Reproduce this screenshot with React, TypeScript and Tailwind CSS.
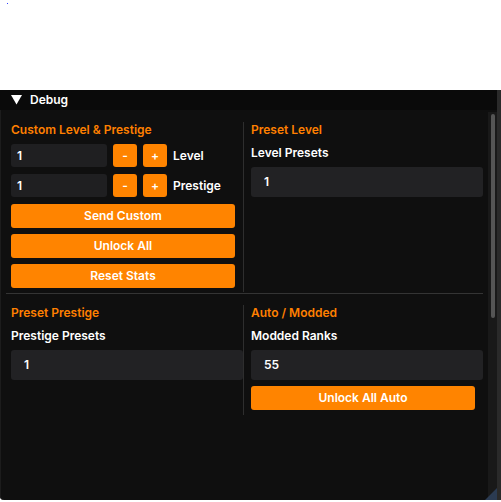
import React from "react";

const orange = "bg-[#ff8400]";

function SmallBtn({ label }: { label: string }) {
  return (
    <div className={`${orange} w-[24px] h-[23px] rounded-[3px] flex items-center justify-center text-white text-[12px] font-semibold`}>
      {label}
    </div>
  );
}

function WideBtn({ label, className = "" }: { label: string; className?: string }) {
  return (
    <div className={`${orange} h-[24px] rounded-[3px] flex items-center justify-center text-white text-[12px] font-semibold ${className}`}>
      {label}
    </div>
  );
}

function Stepper({ name }: { name: string }) {
  return (
    <div className="flex items-center h-[23px]">
      <div className="w-[96px] h-full rounded-[3px] bg-[#1f1f21] flex items-center pl-[6px] text-white text-[12px] font-semibold">1</div>
      <div className="ml-[6px] flex gap-[6px]">
        <SmallBtn label="-" />
        <SmallBtn label="+" />
      </div>
      <span className="ml-[6px] text-white text-[12px] font-semibold">{name}</span>
    </div>
  );
}

function Heading({ children }: { children: React.ReactNode }) {
  return <div className="h-[16px] leading-[16px] text-[#ff8000] text-[12px] font-semibold">{children}</div>;
}

function Label({ children }: { children: React.ReactNode }) {
  return <div className="mt-[7px] h-[16px] leading-[16px] text-white text-[12px] font-semibold">{children}</div>;
}

function Field({ value, className = "" }: { value: string; className?: string }) {
  return (
    <div className={`mt-[6px] h-[30px] rounded-[3px] bg-[#222224] flex items-center pl-[13px] text-white text-[12px] font-semibold ${className}`}>
      {value}
    </div>
  );
}

export default function App() {
  return (
    <div className="w-[501px] h-[502px] bg-white overflow-hidden relative" style={{ fontFamily: "Inter, 'Noto Sans', sans-serif" }}>
      <div className="h-[90px] relative">
        <div className="absolute left-[7px] top-[3px] w-px h-px bg-[#3040ff]" />
      </div>
      <div className="flex h-[410px]">
        <div className="w-[497px] h-full flex flex-col bg-[#0f0f0f] shadow-[inset_1px_0_0_#1c1c1c] rounded-bl-[4px] relative">
          {/* title bar */}
          <div className="h-[20px] bg-[#0a0a0a] flex items-center pl-[11px]">
            <svg width="11" height="10" viewBox="0 0 11 10">
              <polygon points="0,0 11,0 5.5,9.5" fill="#fff" />
            </svg>
            <span className="ml-[8px] text-white text-[12px] font-semibold">Debug</span>
          </div>
          <div className="flex flex-1 min-h-0">
            <div className="flex-1 pl-[6px] pr-[5px]">
              {/* top section */}
              <div className="flex h-[184px] border-b border-[#343434] pt-[12px]">
                <div className="w-[237px] pl-[5px] pr-[8px] flex flex-col">
                  <Heading>Custom Level &amp; Prestige</Heading>
                  <div className="mt-[6px] flex flex-col gap-[7px]">
                    <Stepper name="Level" />
                    <Stepper name="Prestige" />
                  </div>
                  <div className="mt-[7px] flex flex-col gap-[6px]">
                    <WideBtn label="Send Custom" />
                    <WideBtn label="Unlock All" />
                    <WideBtn label="Reset Stats" />
                  </div>
                </div>
                <div className="w-px bg-[#2e2e2e] mb-[1px]" />
                <div className="flex-1 pl-[7px] flex flex-col">
                  <Heading>Preset Level</Heading>
                  <Label>Level Presets</Label>
                  <Field value="1" />
                </div>
              </div>
              {/* bottom section */}
              <div className="flex pt-[11px]">
                <div className="w-[237px] pl-[5px] flex flex-col">
                  <Heading>Preset Prestige</Heading>
                  <Label>Prestige Presets</Label>
                  <Field value="1" />
                </div>
                <div className="w-px bg-[#2e2e2e] h-[110px]" />
                <div className="flex-1 pl-[7px] flex flex-col">
                  <Heading>Auto / Modded</Heading>
                  <Label>Modded Ranks</Label>
                  <Field value="55" />
                  <WideBtn label="Unlock All Auto" className="mt-[6px] mr-[8px] h-[23px]" />
                </div>
              </div>
            </div>
            {/* scrollbar */}
            <div className="w-[9px] mt-[2px] bg-[#191919] pt-[2px] pl-[3px]">
              <div className="w-[4px] h-[204px] rounded-[2px] bg-[#555555]" />
            </div>
          </div>
          <svg className="absolute right-0 bottom-0" width="12" height="12" viewBox="0 0 12 12">
            <polygon points="12,0 12,12 0,12" fill="#2b3b52" />
          </svg>
        </div>
        <div className="w-[4px] h-full bg-[#2a2a2a]" />
      </div>
    </div>
  );
}
